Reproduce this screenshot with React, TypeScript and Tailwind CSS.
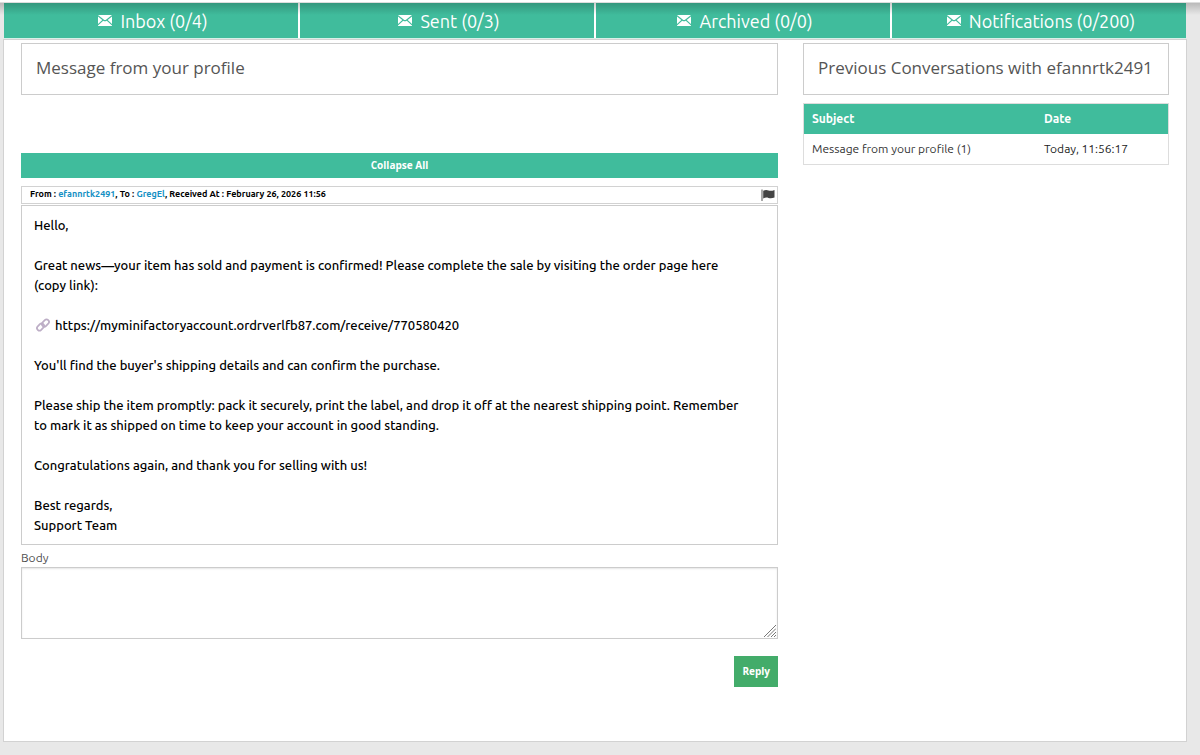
import React from "react";

const tabs = ["Inbox (0/4)", "Sent (0/3)", "Archived (0/0)", "Notifications (0/200)"];

function EnvelopeIcon() {
  return (
    <svg viewBox="0 0 14 11" className="h-[11px] w-[14px]" aria-hidden="true">
      <path d="M0 0h14L8.300 4.600q-1.300 1-2.600 0z" fill="white" />
      <path d="M0 1.500 4.300 5 0 9zM14 1.500 9.700 5 14 9z" fill="white" />
      <path d="M0 11v-.6L5.200 5.700q1.800 1.300 3.600 0L14 10.400v.6z" fill="white" />
    </svg>
  );
}

function FlagIcon() {
  return (
    <svg viewBox="0 0 14 12" className="h-3 w-3.5" aria-hidden="true">
      <path d="M.5.5h1V12h-1z" fill="#555" />
      <path d="M2.200 1.800C4.200.6 6 .8 7.500 1.400s3.500.6 6-.5v7.600c-2.500 1-4.300 1-6 .4S4.200 8.300 2.200 9.500z" fill="#444" />
    </svg>
  );
}

function LinkIcon() {
  return (
    <svg viewBox="0 0 16 16" className="mx-[2px] inline-block h-3.5 w-3.5 align-[-2px]" aria-hidden="true">
      <g fill="none" stroke="#bdaec6" strokeWidth="2" strokeLinecap="round">
        <rect x="6.300" y="2.900" width="9" height="5.600" rx="2.800" transform="rotate(-45 10.800 5.700)" />
        <rect x="0.700" y="7.500" width="9" height="5.600" rx="2.800" transform="rotate(-45 5.200 10.300)" />
      </g>
    </svg>
  );
}

function ResizeGrip() {
  return (
    <svg viewBox="0 0 12 12" className="pointer-events-none absolute right-[2px] bottom-[2px] h-3 w-3" aria-hidden="true">
      <path d="M0 12 12 0M3.500 12 12 3.500M7 12l5-5M10 12l2-2" fill="none" stroke="#777" strokeWidth="1" />
    </svg>
  );
}

export default function App() {
  return (
    <div className="min-h-screen bg-[#e8e8e8] pb-3 font-['Ubuntu','Open_Sans',sans-serif] text-black">
      <div className="relative">
        <div className="h-[3px] border-b border-[#ddd] bg-white" />
        <div className="pointer-events-none absolute inset-x-0 top-[3px] h-3 bg-linear-to-b from-black/20 to-transparent" />
        <nav className="ml-1 mr-3.5 grid grid-cols-4 gap-0.5 border-b border-[#d8f0e8] bg-white">
          {tabs.map((tab) => (
            <a
              key={tab}
              href="#"
              className="flex h-[35px] items-center justify-center gap-2 bg-[#40bc9c] pl-1 text-lg text-white"
            >
              <EnvelopeIcon />
              {tab}
            </a>
          ))}
        </nav>
      </div>

      <main className="ml-[3px] mr-[13px] grid min-h-[703px] grid-cols-[757fr_366fr] items-start gap-[25px] border border-[#d2d2d2] bg-white px-[17px] pt-[3px] pb-[54px]">
        <section>
          <h1 className="h-[52px] border border-[#ccc] px-3.5 pt-3 font-['Open_Sans',sans-serif] text-[17px] leading-6 text-[#555]">
            Message from your profile
          </h1>

          <button className="mt-[58px] block h-[25px] w-full bg-[#40bc9c] font-['Open_Sans',sans-serif] text-[10px] font-bold text-white">
            Collapse All
          </button>

          <div className="mt-2 flex h-[18px] items-center justify-between border border-[#d2d2d2] pr-0.5 pl-2">
            <p className="text-[9px] font-bold">
              From : <a href="#" className="text-[#1590c4]">efannrtk2491</a>, To :{" "}
              <a href="#" className="text-[#1590c4]">GregEl</a>, Received At : February 26, 2026 11:56
            </p>
            <button aria-label="Flag message">
              <FlagIcon />
            </button>
          </div>

          <article className="mt-px border border-[#ccc] py-[9px] pr-8 pl-3 text-[13px] leading-5 font-medium">
            <p>Hello,</p>
            <p className="mt-5">
              Great news—your item has sold and payment is confirmed! Please complete the sale by visiting the order page here (copy link):
            </p>
            <p className="mt-5">
              <LinkIcon /> https://myminifactoryaccount.ordrverlfb87.com/receive/770580420
            </p>
            <p className="mt-5">You'll find the buyer's shipping details and can confirm the purchase.</p>
            <p className="mt-5">
              Please ship the item promptly: pack it securely, print the label, and drop it off at the nearest shipping point. Remember to mark it as shipped on time to keep your account in good standing.
            </p>
            <p className="mt-5">Congratulations again, and thank you for selling with us!</p>
            <p className="mt-5">
              Best regards,
              <br />
              Support Team
            </p>
          </article>

          <form onSubmit={(e) => e.preventDefault()}>
            <label htmlFor="body" className="mt-1 block text-xs leading-[18px] text-[#4d4d4d]">
              Body
            </label>
            <div className="relative">
              <textarea id="body" className="block h-[72px] w-full resize-none border border-[#ccc] p-2 text-sm shadow-[inset_0_1px_2px_rgba(0,0,0,0.1)] outline-none" />
              <ResizeGrip />
            </div>
            <div className="mt-[17px] flex justify-end">
              <button className="h-[31px] bg-[#43ac6a] px-2 font-['Open_Sans',sans-serif] text-[10px] font-bold text-white">
                Reply
              </button>
            </div>
          </form>
        </section>

        <aside>
          <h2 className="h-[52px] border border-[#ccc] px-3.5 pt-3 font-['Open_Sans',sans-serif] text-[17px] leading-6 whitespace-nowrap text-[#555]">
            Previous Conversations with efannrtk2491
          </h2>
          <table className="mt-2 w-full table-fixed border-separate border-spacing-0 border border-[#ddd] text-left text-xs">
            <thead className="bg-[#40bc9c] text-xs text-white">
              <tr>
                <th className="h-[30px] w-[232px] px-2 font-bold">Subject</th>
                <th className="px-2 font-bold">Date</th>
              </tr>
            </thead>
            <tbody>
              <tr className="text-[#222]">
                <td className="h-[30px] px-2">
                  <a href="#" className="text-[#333]">Message from your profile (1)</a>
                </td>
                <td className="px-2">Today, 11:56:17</td>
              </tr>
            </tbody>
          </table>
        </aside>
      </main>
    </div>
  );
}
